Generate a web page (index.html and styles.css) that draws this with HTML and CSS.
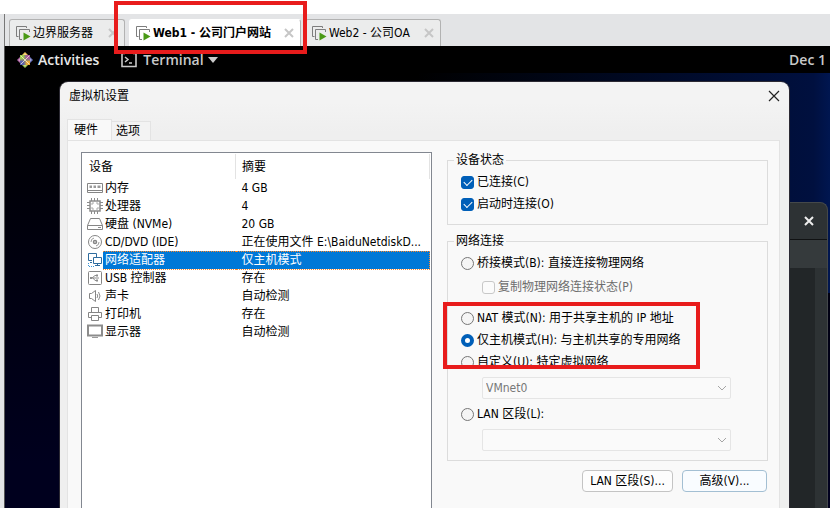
FILE: index.html
```
<!DOCTYPE html>
<html lang="zh-CN">
<head>
<meta charset="utf-8">
<title>虚拟机设置</title>
<link rel="stylesheet" href="styles.css">
</head>
<body>
<svg class="defs" aria-hidden="true">
  <symbol id="vm" viewBox="0 0 16 16"><path d="M3.500 11.500H1.500V1.500H11.500V3" fill="none" stroke="#7d7d7d"/><path d="M7 14.500H4.500V4.500H14.500V7" fill="none" stroke="#7d7d7d"/><path d="M8.500 7.500L15.500 11.500L8.500 15.500Z" fill="#4a9a16"/></symbol>
  <symbol id="x" viewBox="0 0 10 10"><path d="M1 1L9 9M9 1L1 9" fill="none" stroke="currentColor" stroke-width="2"/></symbol>
  <symbol id="down" viewBox="0 0 10 10"><path d="M1 3L5 7L9 3" fill="none" stroke="#a5a5a5"/></symbol>
</svg>
<div class="app">
  <nav class="tabs">
    <button class="tab"><svg class="vm"><use href="#vm"/></svg><span>边界服务器</span><svg class="close"><use href="#x"/></svg></button>
    <button class="tab active"><svg class="vm"><use href="#vm"/></svg><span>Web1 - 公司门户网站</span><svg class="close"><use href="#x"/></svg><i class="mark"></i></button>
    <button class="tab last"><svg class="vm"><use href="#vm"/></svg><span>Web2 - 公司OA</span><svg class="close"><use href="#x"/></svg></button>
  </nav>
  <main class="guest">
    <header class="topbar">
      <svg class="logo" viewBox="0 0 16 16"><path d="M8 0L11 3H5Z" fill="#efc65c"/><path d="M3 3H7.500V7.500H3Z" fill="#9fca50"/><path d="M8.500 3H13V7.500H8.500Z" fill="#a55b9c"/><path d="M3 8.500H7.500V13H3Z" fill="#5a5fae"/><path d="M8.500 8.500H13V13H8.500Z" fill="#e6a93c"/><path d="M0 8L3 5V11Z" fill="#b56bb0"/><path d="M16 8L13 5V11Z" fill="#7379c5"/><path d="M8 16L5 13H11Z" fill="#a3cb58"/><path d="M8 2V14M2 8H14M4 4L12 12M12 4L4 12" stroke="#f4eccd" stroke-width=".8"/></svg>
      <span>Activities</span>
      <svg class="term" viewBox="0 0 16 16"><path d="M4 1.500H1V14.500H15V1.500H12" fill="none" stroke="#c9c9c9" stroke-width="1.600"/><path d="M4 5L7 7.500L4 10M8 11H11" fill="none" stroke="#c9c9c9" stroke-width="1.500"/></svg>
      <span class="dim">Terminal</span>
      <svg class="caret" viewBox="0 0 10 6"><path d="M0 0H10L5 6Z" fill="#c9c9c9"/></svg>
      <span class="dim date">Dec 1</span>
    </header>
    <div class="desktop">
      <aside class="terminal"><div class="term-title"><svg><use href="#x"/></svg></div><div class="term-menu"></div><div class="term-body"></div></aside>
      <section class="dialog">
        <header class="title"><h1>虚拟机设置</h1><button aria-label="关闭"><svg viewBox="0 0 12 12"><path d="M1 1L11 11M11 1L1 11" fill="none" stroke="#222" stroke-width="1.200"/></svg></button></header>
        <div class="pages"><button class="page current">硬件</button><button class="page">选项</button></div>
        <div class="panel">
          <div class="list">
            <table>
              <colgroup><col class="icon-col"><col><col class="summary-col"></colgroup>
              <thead><tr><th colspan="2">设备</th><th>摘要</th></tr></thead>
              <tbody>
              <tr><td><svg viewBox="0 0 16 16"><path d="M.5 3.500H15.500V12.500H.5ZM1 10.500H15" fill="none" stroke="#858585"/><path d="M2.500 5.500H5V8H2.500ZM6.500 5.500H9V8H6.500ZM10.500 5.500H13.500V8H10.500Z" fill="#999"/></svg></td><td>内存</td><td>4 GB</td></tr>
              <tr><td><svg viewBox="0 0 16 16"><path d="M4.500 0V3M7.500 0V3M10.500 0V3M4.500 13V16M7.500 13V16M10.500 13V16M0 4.500H3M0 7.500H3M0 10.500H3M13 4.500H16M13 7.500H16M13 10.500H16" stroke="#8c8c8c"/><path d="M3 3H13V13H3Z" fill="none" stroke="#8c8c8c" stroke-width="1.500"/><path d="M5 7V5H7M9 5H11V7M11 9V11H9M7 11H5V9" fill="none" stroke="#aaa"/></svg></td><td>处理器</td><td>4</td></tr>
              <tr><td><svg viewBox="0 0 16 16"><path d="M3.500 2.500H12.500L15.500 9.500V13.500H.5V9.500ZM.5 9.500H15.500" fill="none" stroke="#858585"/><path d="M11 11.500H14" stroke="#8c8c8c"/></svg></td><td>硬盘 (NVMe)</td><td>20 GB</td></tr>
              <tr><td><svg viewBox="0 0 16 16"><circle cx="8" cy="8" r="6.500" fill="none" stroke="#858585"/><circle cx="8" cy="8" r="1.500" fill="none" stroke="#858585" stroke-width="1.500"/><path d="M4 8A4 4 0 0 1 7 4M12 8A4 4 0 0 1 9 12" fill="none" stroke="#999"/></svg></td><td>CD/DVD (IDE)</td><td>正在使用文件 E:\BaiduNetdiskD...</td></tr>
              <tr class="selected"><td><svg viewBox="0 0 16 16"><path d="M5 8.500H1.500V1.500H9.500V5M3 10.500H5" fill="none" stroke="#2f6c9e"/><path d="M6.500 5.500H14.500V11.500H6.500ZM8 13.500H13M10.500 11.500V13" fill="none" stroke="#2f6c9e"/><path d="M1.500 11V14.500H8" fill="none" stroke="#3c94d6" stroke-dasharray="1 1"/></svg></td><td>网络适配器</td><td>仅主机模式</td></tr>
              <tr><td><svg viewBox="0 0 16 16"><rect x="1.500" y="1.500" width="13" height="13" rx="1" fill="none" stroke="#858585"/><path d="M3 8H12M5 8L8 5.500H9.500M6 8L8 10.500H10" fill="none" stroke="#8c8c8c"/><path d="M3 7H5V9H3ZM9 4.500H11V6.500H9ZM9 9.500H11V11.500H9Z" fill="#8c8c8c"/></svg></td><td>USB 控制器</td><td>存在</td></tr>
              <tr><td><svg viewBox="0 0 16 16"><path d="M2.500 5.500H4.500L8.500 2.500V13.500L4.500 10.500H2.500Z" fill="none" stroke="#858585"/><path d="M10 6Q11.500 8 10 10M11.500 4Q14.500 8 11.500 12" fill="none" stroke="#8c8c8c"/></svg></td><td>声卡</td><td>自动检测</td></tr>
              <tr><td><svg viewBox="0 0 16 16"><path d="M4.500 6V1.500H11.500V6M4 11.500H1.500V6.500H14.500V11.500H12M4.500 9.500H11.500V14.500H4.500Z" fill="none" stroke="#858585"/></svg></td><td>打印机</td><td>存在</td></tr>
              <tr><td><svg viewBox="0 0 16 16"><path d="M1 1.500H15V11.500H1Z" fill="none" stroke="#8c8c8c" stroke-width="2"/><path d="M5 13.500H11" stroke="#999"/></svg></td><td>显示器</td><td>自动检测</td></tr>
              </tbody>
            </table>
          </div>
          <div class="settings">
            <fieldset class="state">
              <legend>设备状态</legend>
              <label><input type="checkbox" checked>已连接(C)</label>
              <label><input type="checkbox" checked>启动时连接(O)</label>
            </fieldset>
            <fieldset class="network">
              <legend>网络连接</legend>
              <label><input type="radio" name="net">桥接模式(B): 直接连接物理网络</label>
              <label class="sub"><input type="checkbox" disabled>复制物理网络连接状态(P)</label>
              <div class="choices">
                <label><input type="radio" name="net">NAT 模式(N): 用于共享主机的 IP 地址</label>
                <label><input type="radio" name="net" checked>仅主机模式(H): 与主机共享的专用网络</label>
                <label><input type="radio" name="net">自定义(U): 特定虚拟网络</label>
                <i class="mark"></i>
              </div>
              <div class="combo"><select disabled aria-label="特定虚拟网络"><option>VMnet0</option></select><svg><use href="#down"/></svg></div>
              <label><input type="radio" name="net">LAN 区段(L):</label>
              <div class="combo"><select disabled aria-label="LAN 区段"><option></option></select><svg><use href="#down"/></svg></div>
            </fieldset>
            <div class="actions"><button>LAN 区段(S)...</button><button class="focus">高级(V)...</button></div>
          </div>
        </div>
      </section>
    </div>
  </main>
</div>
</body>
</html>
```

FILE: styles.css
```
* { box-sizing: border-box; }
html, body { height: 100%; }
body {
  margin: 0;
  overflow: hidden;
  background: #fff;
  color: #000;
  font: 12px/18px "DejaVu Sans Condensed", "Noto Sans CJK SC", sans-serif;
}
button, select, input { font: inherit; color: inherit; margin: 0; }
button { padding: 0; border: 0; background: none; white-space: nowrap; }
svg { display: block; flex: none; }
.defs { position: absolute; width: 0; height: 0; }
.app {
  display: flex;
  flex-direction: column;
  height: 100vh;
  padding: 14px 0 0 4px;
  background: linear-gradient(#fff 14px, #e3e4e6 14px);
}

.tabs {
  display: flex;
  align-items: flex-end;
  gap: 4px;
  height: 32px;
  padding-left: 4px;
  border-left: 1px solid #777;
  flex: none;
}
.tab {
  position: relative;
  display: flex;
  align-items: center;
  width: 116px;
  height: 27px;
  padding: 0 6px 0 5px;
  border: 1px solid #b2b2b2;
  border-bottom: 0;
  border-radius: 3px 3px 0 0;
  background: #ebecec;
}
.tab.active { width: 172px; background: #fff; border-color: #fff #b2b2b2 #fff #fff; font-weight: bold; }
.tab.last { width: 136px; }
.vm { width: 16px; height: 16px; margin-right: 2px; }
.close { width: 10px; height: 10px; margin-left: auto; color: #c6c6c6; }
.mark {
  position: absolute;
  z-index: 3;
  border: 4px solid #e81c1c;
  pointer-events: none;
}
.tab .mark { inset: -19px -7px -8px -16px; }

.guest {
  display: flex;
  flex-direction: column;
  flex: 1;
  min-height: 0;
  border-left: 1px solid #555;
  background: #000;
}
.topbar {
  display: flex;
  align-items: center;
  height: 27px;
  padding: 0 4px 0 12px;
  flex: none;
  color: #e8e8e8;
  font: 600 14px/27px "Open Sans", "Noto Sans", sans-serif;
}
.logo { width: 16px; height: 16px; margin-right: 5px; }
.term { width: 16px; height: 16px; margin: 0 6px 0 22px; }
.caret { width: 10px; height: 6px; margin-left: 4px; }
.dim { color: #c9c9c9; }
.date { margin-left: auto; }
.desktop {
  position: relative;
  display: flex;
  flex: 1;
  min-height: 0;
  padding: 9px 41px 0 55px;
  background: linear-gradient(90deg, transparent 50%, #00103f 98%, #001650) 0 0 / 100% 220px no-repeat, linear-gradient(#000, #00001e 90%);
}

.terminal {
  position: absolute;
  top: 129px;
  right: 2px;
  bottom: 0;
  width: 300px;
  display: flex;
  flex-direction: column;
  border: 1px solid #44484a;
  border-bottom: 0;
  border-radius: 8px 8px 0 0;
  background: #2d3234;
}
.term-title { display: flex; align-items: center; justify-content: flex-end; height: 37px; padding-right: 13px; border-bottom: 1px solid #101213; color: #eee; }
.term-title svg { width: 10px; height: 10px; }
.term-menu { height: 28px; background: #353a3c; }
.term-body { flex: 1; margin-right: 12px; background: #222628; }

.dialog {
  position: relative;
  display: flex;
  flex-direction: column;
  flex: 1;
  padding: 0 9px 0 7px;
  border-radius: 8px 8px 0 0;
  background: linear-gradient(#f3f3f3 20px, #efefef 50px);
  box-shadow: 0 0 0 1px #2b2933;
}
.title { display: flex; align-items: center; justify-content: space-between; height: 28px; margin-bottom: 9px; }
.title h1 { margin: 0 0 0 2px; font: inherit; }
.title svg { width: 12px; height: 12px; }
.title button { padding: 4px 0; }
.pages { display: flex; align-items: flex-end; height: 21px; flex: none; }
.page { width: 39px; height: 19px; padding: 0 4px; border: 1px solid #e3e3e3; border-width: 1px 1px 0 0; background: #f3f3f3; text-align: left; }
.page.current { width: 45px; height: 21px; padding-left: 6px; border-left-width: 1px; background: #f9f9f9; }
.panel {
  display: grid;
  grid-template-columns: minmax(0, 351fr) minmax(0, 321fr);
  column-gap: 15px;
  flex: 1;
  min-height: 0;
  padding: 11px 11px 0 13px;
  border: 1px solid #e3e3e3;
  border-bottom: 0;
  background: #f9f9f9;
}

.list { border: 1px solid #828790; border-bottom: 0; background: #fff; padding: 1px 1px 0 5px; }
table { width: 100%; border-collapse: collapse; table-layout: fixed; }
.icon-col { width: 16px; }
.summary-col { width: 194px; }
th { height: 25px; padding: 0 0 0 2px; font-weight: normal; text-align: left; border-right: 1px solid #e3e3e3; }
th + th { padding-left: 6px; }
td { height: 18px; padding: 0; white-space: nowrap; line-height: 16px; }
td:nth-child(2) { padding-left: 2px; }
td:last-child { padding-left: 6px; }
td svg { width: 16px; height: 16px; }
.selected td + td { background: #0078d7; color: #fff; border-top: 1px dotted #ff8728; border-bottom: 1px dotted #ff8728; }
.selected td:last-child { border-right: 1px dotted #ff8728; }

.settings { min-width: 0; }
fieldset { min-width: 0; margin: 0; border: 1px solid #dcdcdc; padding: 0 13px; }
legend { padding: 0 2px; margin-left: -7px; line-height: 16px; }
.state { height: 73px; }
.network { margin-top: 8px; height: 228px; }
label { display: flex; align-items: center; gap: 3px; height: 22px; white-space: nowrap; }
fieldset legend + label { margin-top: 3px; }
input {
  appearance: none;
  flex: none;
  width: 13px;
  height: 13px;
  border: 1px solid #767676;
  background: #f5f5f5;
}
input[type="radio"] { border-radius: 50%; }
input[type="radio"]:checked { border: 4px solid #005fb8; background: #fff; }
input[type="checkbox"] { border-radius: 3px; }
input[type="checkbox"]:disabled { border-color: #c8c8c8; background: #fbfbfb; }
input[type="checkbox"]:checked { display: grid; place-items: center; border-color: #005fb8; background: #005fb8; }
input[type="checkbox"]:checked::after { content: ""; width: 7px; height: 4px; margin-bottom: 2px; border: solid #fff; border-width: 0 0 1px 1px; transform: rotate(-45deg); }
.sub { margin: 2px 0 0 21px; color: #6d6d6d; }
.choices { position: relative; margin-top: 9px; }
.choices .mark { inset: -5px 54px 4px -18px; }
.combo { position: relative; margin: 4px 23px 4px 21px; }
.combo + label { margin-top: 3px; }
select { appearance: none; display: block; width: 100%; height: 22px; padding: 0 3px; border: 1px solid #e5e5e5; border-radius: 2px; background: #fafafa; }
select:disabled { color: #777; opacity: 1; }
.combo svg { position: absolute; right: 4px; top: 6px; width: 10px; height: 10px; }
.actions { display: flex; justify-content: flex-end; gap: 9px; margin: 9px 1px 0 0; }
.actions button { width: 91px; height: 22px; border: 1px solid #c4c4c4; border-radius: 4px; background: #fdfdfd; }
.actions .focus { width: 85px; border-color: #a3bfd3; background: #f9fcff; }
```
